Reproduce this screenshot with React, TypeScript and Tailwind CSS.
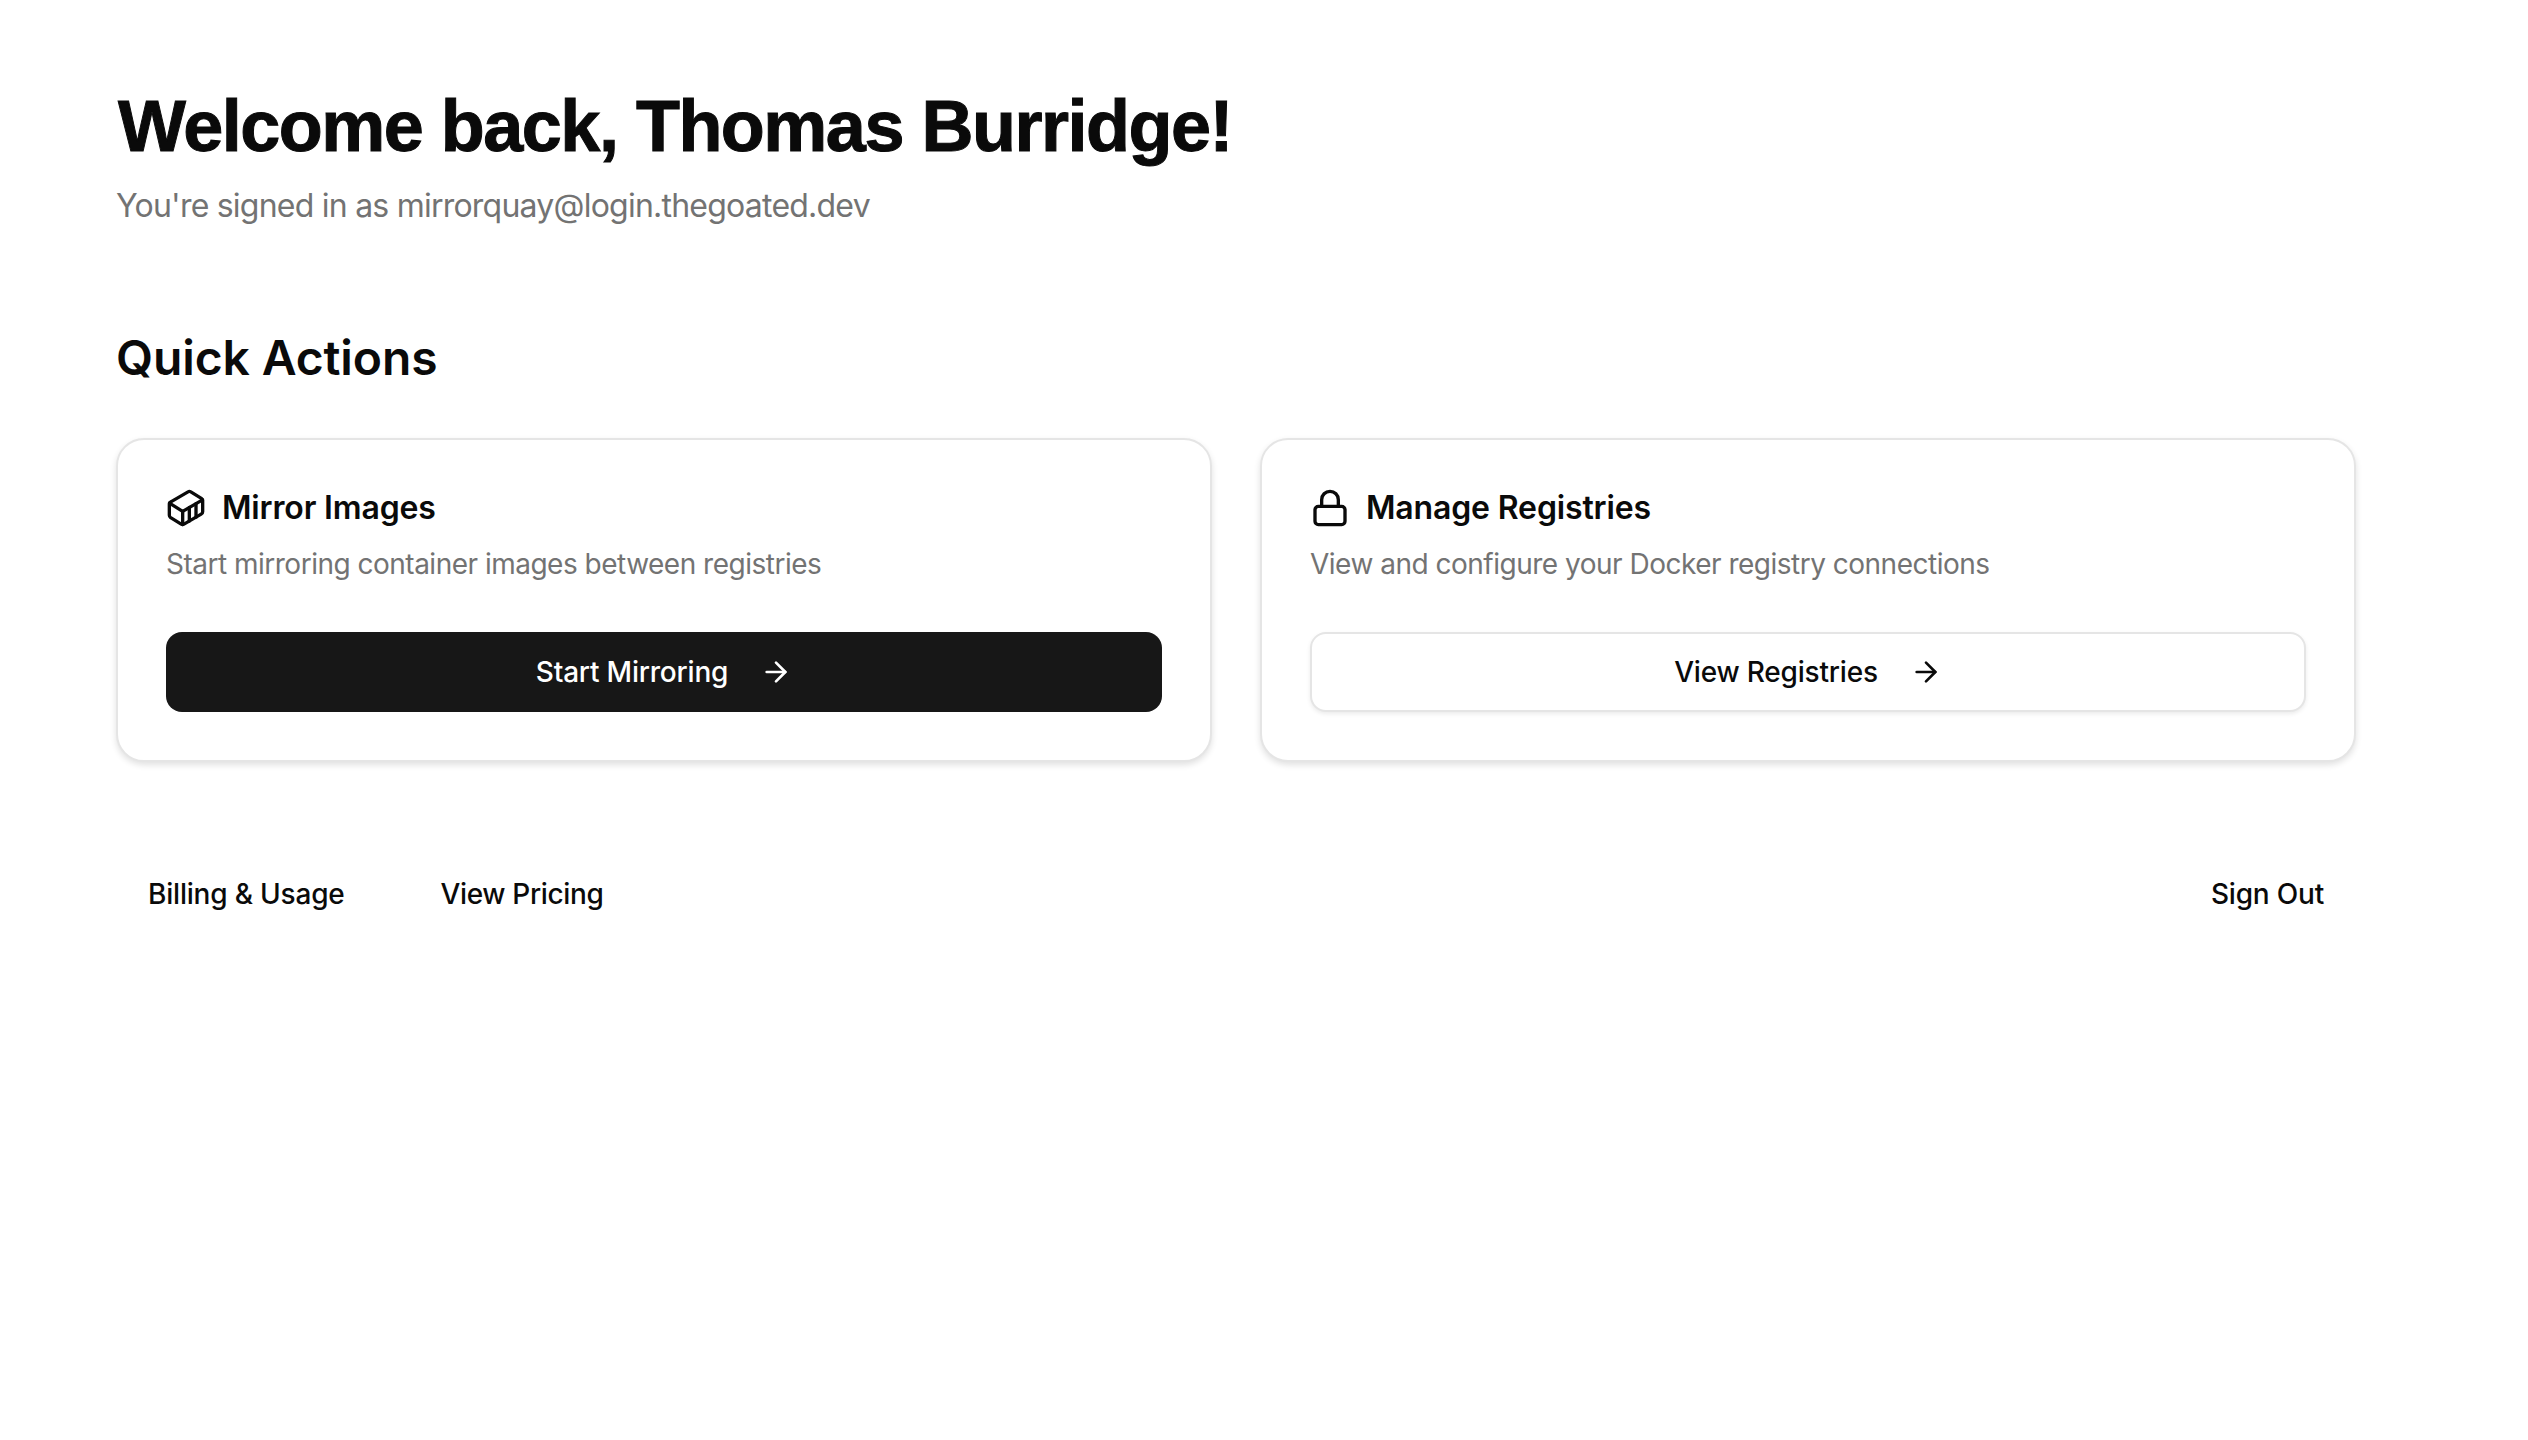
import { ArrowRight, Container, Lock } from 'lucide-react';

const sans = 'font-[Inter,"Liberation_Sans",sans-serif]';

function ActionCard({ icon, title, text, button, dark }) {
    return (
        <div className="rounded-[28px] border-2 border-[#e5e5e5] bg-white p-12 shadow-[0_3px_6px_rgba(0,0,0,0.12)]">
            <div className="flex items-center gap-4 h-10">
                {icon}
                <h3 className="text-[32px] leading-10 font-semibold tracking-[-0.15px] text-[#0a0a0a]">{title}</h3>
            </div>
            <p className="mt-4 text-[28px] leading-10 tracking-[-0.5px] text-[#737373]">{text}</p>
            {dark ? (
                <button className="mt-12 flex h-20 w-full items-center justify-center gap-8 rounded-2xl bg-[#171717] text-[28px] font-medium tracking-[-0.2px] text-white">
                    {button}
                    <ArrowRight size={32} strokeWidth={2} />
                </button>
            ) : (
                <button className="mt-12 flex h-20 w-full items-center justify-center gap-8 rounded-2xl border-2 border-[#e5e5e5] bg-white text-[28px] font-medium tracking-[-0.2px] text-[#0a0a0a] shadow-[0_2px_4px_rgba(0,0,0,0.08)]">
                    {button}
                    <ArrowRight size={32} strokeWidth={2} />
                </button>
            )}
        </div>
    );
}

export default function App() {
    return (
        <div className={`min-h-screen bg-white ${sans}`}>
            <div className="ml-[116px] w-[2240px] pt-[86px]">
                <h1 className="pl-[2px] text-[72px] leading-20 font-['Liberation_Sans',sans-serif] font-bold tracking-[-1.5px] [-webkit-text-stroke:1px_#0a0a0a] text-[#0a0a0a]">
                    Welcome back, Thomas Burridge!
                </h1>
                <p className="mt-4 text-[32px] leading-12 tracking-[-0.77px] text-[#737373]">
                    You're signed in as mirrorquay@login.thegoated.dev
                </p>

                <h2 className="mt-24 text-[48px] leading-16 font-semibold tracking-[-0.13px] text-[#0a0a0a]">Quick Actions</h2>

                <div className="mt-12 grid grid-cols-2 gap-12">
                    <ActionCard
                        icon={<Container size={40} strokeWidth={2} className="text-[#0a0a0a]" />}
                        title="Mirror Images"
                        text="Start mirroring container images between registries"
                        button="Start Mirroring"
                        dark
                    />
                    <ActionCard
                        icon={<Lock size={40} strokeWidth={2} className="text-[#0a0a0a]" />}
                        title="Manage Registries"
                        text="View and configure your Docker registry connections"
                        button="View Registries"
                        dark={false}
                    />
                </div>

                <div className="mt-24 flex items-center justify-between">
                    <div className="flex gap-8">
                        <button className="h-[72px] px-8 text-[28px] font-medium tracking-[-0.2px] text-[#0a0a0a]">Billing &amp; Usage</button>
                        <button className="h-[72px] px-8 text-[28px] font-medium tracking-[-0.35px] text-[#0a0a0a]">View Pricing</button>
                    </div>
                    <button className="h-[72px] px-8 text-[28px] font-medium tracking-[-0.2px] text-[#0a0a0a]">Sign Out</button>
                </div>
            </div>
        </div>
    );
}
